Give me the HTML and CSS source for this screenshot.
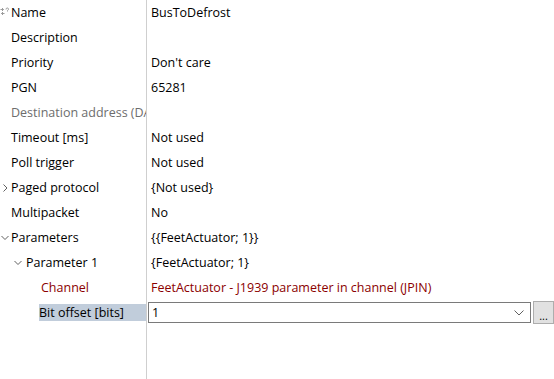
FILE: index.html
```html
<!DOCTYPE html>
<html lang="en">
<head>
  <meta charset="UTF-8">
  <title>Properties</title>
  <link rel="stylesheet" href="styles.css">
</head>
<body>
  <div class="grid">
    <div class="name">
      <svg class="key-icon" width="9" height="9" viewBox="0 0 9 9"><path d="M0.5 2.5 h3 M2 1 l1.5 1.5 l-1.5 1.5 M4.5 6.5 h-3 M3 5 l-1.5 1.5 l1.5 1.5" stroke="#9a9a9a" fill="none"/><path d="M6 2.5 q0-1.5 1.3-1.5 q1.2 0 1.2 1.2 q0 0.8-1 1.3 v1" stroke="#9a9a9a" fill="none"/></svg>
      <span class="label">Name</span>
    </div>
    <div class="value">BusToDefrost</div>

    <div class="name"><span class="label">Description</span></div>
    <div class="value"></div>

    <div class="name"><span class="label">Priority</span></div>
    <div class="value">Don't care</div>

    <div class="name"><span class="label">PGN</span></div>
    <div class="value">65281</div>

    <div class="name disabled"><span class="label">Destination address (DA)</span></div>
    <div class="value"></div>

    <div class="name"><span class="label">Timeout [ms]</span></div>
    <div class="value">Not used</div>

    <div class="name"><span class="label">Poll trigger</span></div>
    <div class="value">Not used</div>

    <div class="name">
      <svg class="arrow" width="8" height="8" viewBox="0 0 8 8"><path d="M2.5 0.5 l3.5 3.5 l-3.5 3.5" stroke="#606060" fill="none"/></svg>
      <span class="label">Paged protocol</span>
    </div>
    <div class="value">{Not used}</div>

    <div class="name"><span class="label">Multipacket</span></div>
    <div class="value">No</div>

    <div class="name">
      <svg class="arrow" width="8" height="8" viewBox="0 0 8 8"><path d="M0.5 2 l3.5 3.5 l3.5 -3.5" stroke="#606060" fill="none"/></svg>
      <span class="label">Parameters</span>
    </div>
    <div class="value">{{FeetActuator; 1}}</div>

    <div class="name level1">
      <svg class="arrow" width="8" height="8" viewBox="0 0 8 8"><path d="M0.5 2 l3.5 3.5 l3.5 -3.5" stroke="#606060" fill="none"/></svg>
      <span class="label">Parameter 1</span>
    </div>
    <div class="value">{FeetActuator; 1}</div>

    <div class="name level2 linked"><span class="label">Channel</span></div>
    <div class="value linked">FeetActuator - J1939 parameter in channel (JPIN)</div>

    <div class="name level2"><span class="label selected">Bit offset [bits]</span></div>
    <div class="value editor">
      <div class="combo">
        <span>1</span>
        <svg width="10" height="6" viewBox="0 0 10 6"><path d="M0.5 0.5 l4.5 4.5 l4.5 -4.5" stroke="#606060" fill="none"/></svg>
      </div>
      <button class="more">...</button>
    </div>

    <div class="name"></div>
    <div class="value"></div>
  </div>
</body>
</html>
```

FILE: styles.css
```css
html, body {
  height: 100%;
}

body {
  margin: 0;
  background: #ffffff;
  font-family: "Open Sans", "Noto Sans", sans-serif;
  font-size: 12.5px;
  color: #000000;
  overflow: hidden;
}

.grid {
  display: grid;
  grid-template-columns: 147px 1fr;
  grid-template-rows: repeat(13, 25px) 1fr;
  height: 100%;
}

.name {
  display: flex;
  align-items: center;
  padding-left: 11px;
  border-right: 1px solid #cfcfcf;
  white-space: nowrap;
  overflow: hidden;
  position: relative;
}

.label {
  display: flex;
  align-items: center;
  height: 17px;
}

.key-icon {
  position: absolute;
  left: 0;
  top: 7px;
}

.arrow {
  position: absolute;
  left: 1px;
  top: 9px;
}

.level1 {
  padding-left: 26px;
}

.level1 .arrow {
  left: 14px;
}

.level2 {
  padding-left: 39px;
}

.level2.linked {
  padding-left: 41px;
}

.disabled {
  color: #6d6d6d;
}

.linked {
  color: #8b0000;
}

.selected {
  background: #c1cddb;
  width: 100%;
  padding-left: 0;
}

.value {
  display: flex;
  align-items: center;
  padding-left: 4px;
  white-space: nowrap;
  overflow: hidden;
}

.editor {
  padding-left: 1px;
  gap: 2px;
}

.combo {
  flex: 1;
  height: 19px;
  border: 1px solid #7a7a7a;
  display: flex;
  align-items: center;
  justify-content: space-between;
  padding: 0 6px 0 3px;
}

.more {
  width: 21px;
  height: 23px;
  margin: 0;
  padding: 0 0 2px;
  border: 1px solid #adadad;
  background: #e1e1e1;
  font-family: inherit;
  font-size: 11px;
  line-height: 1;
  display: flex;
  align-items: flex-end;
  justify-content: center;
  color: #000000;
}
```
